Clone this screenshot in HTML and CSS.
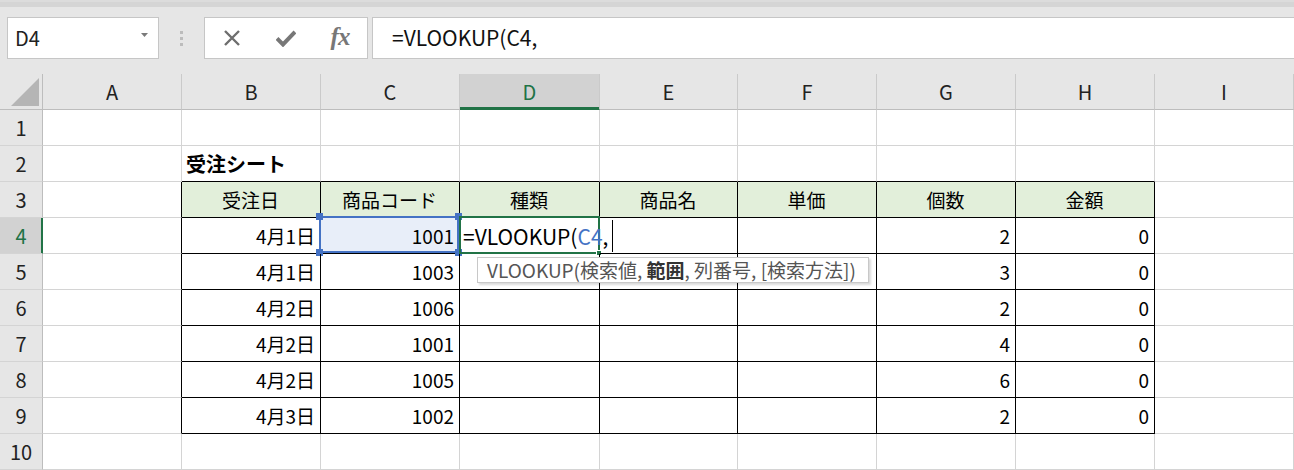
FILE: index.html
```html
<!DOCTYPE html>
<html lang="ja">
<head>
    <meta charset="UTF-8">
    <title>受注シート</title>
    <link rel="stylesheet" href="styles.css">
</head>
<body>
    <div class="window-edge"></div>

    <!-- formula bar -->
    <div class="formula-bar">
        <div class="name-box">
            <span>D4</span>
            <svg class="drop" width="7" height="4" viewBox="0 0 7 4"><path d="M0 0H7L3.5 4Z" fill="#7a7a7a"/></svg>
        </div>
        <div class="grip"><i></i><i></i><i></i></div>
        <div class="fx-buttons">
            <span class="fx-btn">
                <svg width="18" height="16" viewBox="0 0 18 16"><path d="M2 1L16 15M16 1L2 15" stroke="#6e6e6e" stroke-width="2.4" fill="none"/></svg>
            </span>
            <span class="fx-btn">
                <svg width="20" height="17" viewBox="0 0 20 17"><path d="M1 8.5L7 14.5L19 2" stroke="#777" stroke-width="4" fill="none"/></svg>
            </span>
            <span class="fx-btn fx">fx</span>
        </div>
        <div class="formula-input">=VLOOKUP(C4,</div>
    </div>

    <!-- sheet -->
    <div class="sheet">
        <div class="corner"><svg width="28" height="28" viewBox="0 0 28 28"><path d="M28 0V28H0Z" fill="#b5b5b5"/></svg></div>
        <div class="ch">A</div>
        <div class="ch">B</div>
        <div class="ch">C</div>
        <div class="ch on">D</div>
        <div class="ch">E</div>
        <div class="ch">F</div>
        <div class="ch">G</div>
        <div class="ch">H</div>
        <div class="ch">I</div>

        <div class="rh">1</div>
        <div class="c"></div><div class="c"></div><div class="c"></div><div class="c"></div><div class="c"></div><div class="c"></div><div class="c"></div><div class="c"></div><div class="c"></div>

        <div class="rh">2</div>
        <div class="c"></div>
        <div class="c tt title">受注シート</div>
        <div class="c tt"></div><div class="c tt"></div><div class="c tt"></div><div class="c tt"></div><div class="c tt"></div><div class="c tt"></div>
        <div class="c"></div>

        <div class="rh">3</div>
        <div class="c tl"></div>
        <div class="c t th">受注日</div>
        <div class="c t th">商品コード</div>
        <div class="c t th">種類</div>
        <div class="c t th">商品名</div>
        <div class="c t th">単価</div>
        <div class="c t th">個数</div>
        <div class="c t th">金額</div>
        <div class="c"></div>

        <div class="rh on">4</div>
        <div class="c tl"></div>
        <div class="c t num">4月1日</div>
        <div class="c t num ref">1001
            <span class="ref-box"><i class="h tl-h"></i><i class="h tr-h"></i><i class="h bl-h"></i><i class="h br-h"></i></span>
        </div>
        <div class="c t edit">
            <span class="edit-text">=VLOOKUP(<span class="arg">C4</span>,<span class="caret"></span></span>
            <span class="active-box"><i class="fill"></i></span>
            <span class="tip"><span>VLOOKUP(検索値, <b>範囲</b>, 列番号, [検索方法])</span></span>
        </div>
        <div class="c t"></div>
        <div class="c t"></div>
        <div class="c t num">2</div>
        <div class="c t num">0</div>
        <div class="c"></div>

        <div class="rh">5</div>
        <div class="c tl"></div>
        <div class="c t num">4月1日</div>
        <div class="c t num">1003</div>
        <div class="c t"></div><div class="c t"></div><div class="c t"></div>
        <div class="c t num">3</div>
        <div class="c t num">0</div>
        <div class="c"></div>

        <div class="rh">6</div>
        <div class="c tl"></div>
        <div class="c t num">4月2日</div>
        <div class="c t num">1006</div>
        <div class="c t"></div><div class="c t"></div><div class="c t"></div>
        <div class="c t num">2</div>
        <div class="c t num">0</div>
        <div class="c"></div>

        <div class="rh">7</div>
        <div class="c tl"></div>
        <div class="c t num">4月2日</div>
        <div class="c t num">1001</div>
        <div class="c t"></div><div class="c t"></div><div class="c t"></div>
        <div class="c t num">4</div>
        <div class="c t num">0</div>
        <div class="c"></div>

        <div class="rh">8</div>
        <div class="c tl"></div>
        <div class="c t num">4月2日</div>
        <div class="c t num">1005</div>
        <div class="c t"></div><div class="c t"></div><div class="c t"></div>
        <div class="c t num">6</div>
        <div class="c t num">0</div>
        <div class="c"></div>

        <div class="rh">9</div>
        <div class="c tl"></div>
        <div class="c t num">4月3日</div>
        <div class="c t num">1002</div>
        <div class="c t"></div><div class="c t"></div><div class="c t"></div>
        <div class="c t num">2</div>
        <div class="c t num">0</div>
        <div class="c"></div>

        <div class="rh">10</div>
        <div class="c"></div><div class="c"></div><div class="c"></div><div class="c"></div><div class="c"></div><div class="c"></div><div class="c"></div><div class="c"></div><div class="c"></div>
    </div>
</body>
</html>
```

FILE: styles.css
```css
* {
    margin: 0;
    padding: 0;
    box-sizing: border-box;
}

body {
    background: #e6e6e6;
    font-family: "Noto Sans CJK JP", "Noto Sans", sans-serif;
    color: #000;
    overflow: hidden;
    width: 1294px;
    height: 470px;
}

.window-edge {
    height: 7px;
    background: #d5d5d5;
    border-top: 2px solid #dcdcdc;
}

/* formula bar */
.formula-bar {
    display: flex;
    height: 42px;
    margin-top: 10px;
    margin-bottom: 15px;
}

.name-box {
    margin-left: 7px;
    width: 152px;
    background: #fff;
    border: 1px solid #c6c6c6;
    display: flex;
    align-items: center;
    justify-content: space-between;
    padding: 0 10px 2px 7px;
    font-size: 20px;
    color: #222;
}

.name-box .drop {
    margin-bottom: 4px;
}

.grip {
    width: 45px;
    display: flex;
    flex-direction: column;
    align-items: center;
    justify-content: center;
    gap: 3px;
}

.grip i {
    width: 3px;
    height: 3px;
    background: #bcbcbc;
}

.fx-buttons {
    width: 164px;
    background: #fff;
    border: 1px solid #c6c6c6;
    display: flex;
}

.fx-btn {
    width: 54px;
    display: flex;
    align-items: center;
    justify-content: center;
}

.fx {
    font-family: "Liberation Serif", serif;
    font-style: italic;
    font-weight: bold;
    font-size: 25px;
    color: #777;
    padding-bottom: 3px;
    letter-spacing: -1px;
}

.formula-input {
    flex: 1;
    margin-left: 4px;
    background: #fff;
    border: 1px solid #c6c6c6;
    border-right: none;
    display: flex;
    align-items: center;
    padding: 0 0 2px 19px;
    font-size: 21px;
    color: #111;
}

/* sheet grid */
.sheet {
    display: grid;
    grid-template-columns: 43px 139px 139px 139px 140px 138px 139px 139px 139px 1fr;
    grid-auto-rows: 36px;
    background: #fff;
}

.corner {
    background: #e6e6e6;
    border-right: 1px solid #bdbdbd;
    border-bottom: 1px solid #bdbdbd;
    display: flex;
    align-items: flex-end;
    justify-content: flex-end;
    padding: 0 3px 3px 0;
}

.ch {
    background: #e6e6e6;
    border-right: 1px solid #cacaca;
    border-bottom: 1px solid #bdbdbd;
    display: flex;
    align-items: center;
    justify-content: center;
    font-size: 20px;
    color: #222;
}

.ch.on {
    background: #d2d2d2;
    color: #217346;
    border-bottom-color: #217346;
    box-shadow: inset 0 -2px 0 #217346;
}

.rh {
    background: #e6e6e6;
    border-right: 1px solid #bdbdbd;
    border-bottom: 1px solid #d4d4d4;
    display: flex;
    align-items: center;
    justify-content: center;
    font-size: 20px;
    color: #222;
}

.rh.on {
    background: #d2d2d2;
    color: #217346;
    border-right-color: #217346;
    box-shadow: inset -1px 0 0 #217346;
}

.c {
    position: relative;
    border-right: 1px solid #d4d4d4;
    border-bottom: 1px solid #d4d4d4;
    display: flex;
    align-items: center;
    padding: 0 5px 0 4px;
    font-size: 19px;
    white-space: nowrap;
}

/* table borders */
.t {
    border-right-color: #000;
    border-bottom-color: #000;
}

.tl {
    border-right-color: #000;
}

.tt {
    border-bottom-color: #000;
}

.th {
    background: #e2efda;
    justify-content: center;
}

.num {
    justify-content: flex-end;
}

.title {
    font-weight: bold;
    font-size: 20px;
}

/* range referenced by the formula */
.ref {
    background: #e8eef9;
}

.ref-box {
    position: absolute;
    left: -2px;
    top: -2px;
    width: 140px;
    height: 37px;
    border: 2px solid #4472c4;
}

.ref-box .h {
    position: absolute;
    width: 7px;
    height: 7px;
    background: #4472c4;
}

.tl-h { left: -5px; top: -5px; }
.tr-h { right: -5px; top: -5px; }
.bl-h { left: -5px; bottom: -5px; }
.br-h { right: -5px; bottom: -5px; }

/* cell being edited */
.edit {
    padding-left: 3px;
}

.edit-text {
    position: relative;
    z-index: 1;
    display: flex;
    align-items: center;
    font-size: 21px;
}

.arg {
    color: #4472c4;
}

.caret {
    display: inline-block;
    width: 1px;
    height: 32px;
    background: #000;
    margin-left: 4px;
}

.active-box {
    position: absolute;
    left: -1px;
    top: -2px;
    width: 141px;
    height: 38px;
    border: 2px solid #217346;
}

.active-box .fill {
    position: absolute;
    right: -4px;
    bottom: -4px;
    width: 6px;
    height: 6px;
    background: #217346;
    border: 1px solid #fff;
}

.tip {
    position: absolute;
    z-index: 2;
    left: 17px;
    top: 39px;
    width: 392px;
    height: 26px;
    background: #fff;
    border: 1px solid #c8c8c8;
    box-shadow: 2px 2px 2px rgba(0, 0, 0, 0.15);
    display: flex;
    align-items: center;
    padding: 0 0 1px 9px;
    font-size: 19px;
    color: #555;
}

.tip b {
    color: #333;
}
```
